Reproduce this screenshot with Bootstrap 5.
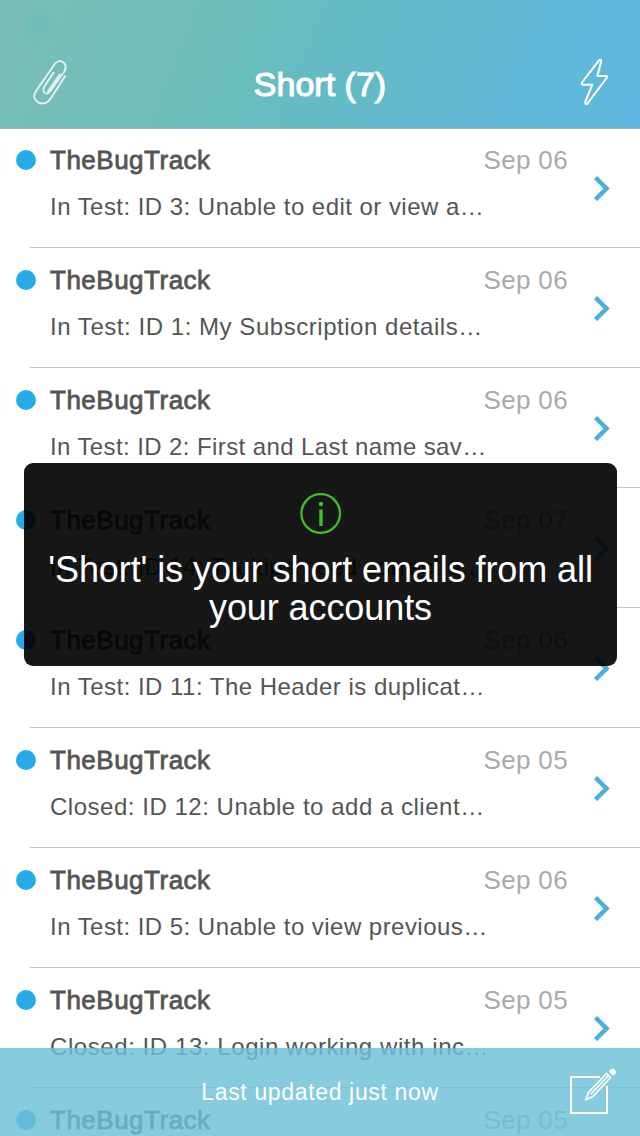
<!DOCTYPE html>
<html lang="en">
<head>
<meta charset="utf-8">
<meta name="viewport" content="width=device-width, initial-scale=1">
<title>Short (7)</title>
<link rel="stylesheet" href="https://cdn.jsdelivr.net/npm/bootstrap@5.3.0/dist/css/bootstrap.min.css">
<style>
  body { font-family: "Liberation Sans", Arial, sans-serif; height: 1136px; background: #fff; color: #555; }
  .topbar { height: 129px; padding: 40px 30px 0 32px; border-bottom: 1px solid #a9adae;
    background: radial-gradient(circle 20px at 38px 26px, rgba(95,186,186,.6), transparent),
      linear-gradient(112deg, #7bbdb8 0%, #69bdbd 40%, #62bac9 58%, #60b8d8 82%, #5fb7e0 100%); }
  .topbar h1 { font-size: 34px; line-height: 40px; font-weight: 400; color: #fff; -webkit-text-stroke: 1.1px #fff; padding: 24px 8px 0 0; }
  #mails { height: 1007px; overflow: hidden; }
  .mail-row { height: 120px; padding-left: 16px; }
  .mail-row:first-child { height: 119px; }
  .mail-row:first-child .mail-body { padding-top: 15px; }
  .mail-row:first-child .dot { margin-top: 21px; }
  .dot { width: 20px; height: 20px; margin-top: 22px; background: #27aae8; border-radius: 50%; }
  .mail-row .line { margin-left: -6px; border-bottom: 1px solid #c6c6c8; padding-left: 20px; }
  .mail-body { width: 518px; padding-top: 16px; }
  .sender { font-size: 26px; line-height: 32px; letter-spacing: .5px; -webkit-text-stroke: .8px #555; }
  .stamp { font-size: 26px; line-height: 32px; letter-spacing: .35px; color: #aaa; }
  .subject { font-size: 24px; line-height: 30px; margin-top: 16px; white-space: nowrap; }
  .arrow { margin-left: 25px; }
  .notice { top: 463px; left: 24px; width: 593px; height: 203px; padding-top: 29px; border-radius: 9px;
    background: rgba(0,0,0,.91); color: #fff; font-size: 36px; line-height: 38px; letter-spacing: -.09px; }
  .notice svg { margin-bottom: 15px; }
  .bottombar { height: 88px; background: rgba(109,192,216,.82); color: #fff; font-size: 23px; letter-spacing: .65px; }
  .compose { right: 22px; top: 18px; }
</style>
</head>
<body class="position-relative overflow-hidden">
<header class="topbar d-flex justify-content-between align-items-start">
  <svg width="36" height="50" viewBox="0 0 36 50" class="mt-3" fill="none" stroke="#fff" stroke-opacity=".78" stroke-width="2">
    <path d="M33.500 19.500 19 42C15.500 48 9 49 5 45.500S1.500 39 4 35L22 9C25 4.500 28.500 4 31.500 6.500S34.500 12 32 16L18 35.500C16 38 13.500 38 12 36S11.500 32 13 29.500L22 16M28 18 15.500 36"/>
  </svg>
  <h1 class="flex-fill text-center mb-0">Short (7)</h1>
  <svg width="30" height="50" viewBox="0 0 30 50" class="mt-3" fill="none" stroke="#fff" stroke-width="2" stroke-linejoin="round">
    <path d="M19.200 4.200 2 26.500Q1 28.700 3 28.700H12.300L5.200 46Q5 48.600 7.200 47.800L27 21.500Q27.600 20 26.400 20H17.300L21.300 5Q21.200 2.700 19.200 4.200Z"/>
  </svg>
</header>
<main id="mails"></main>

<div class="notice position-absolute text-center">
  <svg class="d-block mx-auto" width="44" height="44" viewBox="0 0 44 44" fill="none" stroke="#3fc127">
    <circle cx="21.700" cy="21.500" r="19.300" stroke-width="2.200"/>
    <circle cx="22" cy="12" r="2.200" fill="#3fc127" stroke="none"/>
    <path d="M22 17.500V34" stroke-width="3.400"/>
  </svg>
  <div>'Short' is your short emails from all<br>your accounts</div>
</div>

<footer class="bottombar position-absolute bottom-0 start-0 w-100 d-flex align-items-center justify-content-center">
  <span>Last updated just now</span>
  <svg class="compose position-absolute" width="50" height="50" viewBox="0 0 50 50" fill="none" stroke="#fff" stroke-width="2">
    <path d="M32 11H3V47H39V20"/>
    <path d="M18 33.500 20.500 26.500 38.500 7.500 42.500 11.500 25 30.500ZM22.500 28.500 40.500 9.500" stroke-width="1.700"/>
    <path d="M41 5.500Q44 .5 47 4T44.500 9.500Z" fill="#fff" stroke="none"/>
  </svg>
</footer>

<script src="https://cdn.jsdelivr.net/npm/bootstrap@5.3.0/dist/js/bootstrap.bundle.min.js"></script>
<script>
  // subject, date, tracking of the subject line in px
  const mails = [
    ["In Test: ID 3: Unable to edit or view a…", "Sep 06", .46],
    ["In Test: ID 1: My Subscription details…", "Sep 06", .54],
    ["In Test: ID 2: First and Last name sav…", "Sep 06", .4],
    ["In Test: ID 14: Tooltips need correctio…", "Sep 07", .42],
    ["In Test: ID 11: The Header is duplicat…", "Sep 06", .48],
    ["Closed: ID 12: Unable to add a client…", "Sep 05", .52],
    ["In Test: ID 5: Unable to view previous…", "Sep 06", .46],
    ["Closed: ID 13: Login working with inc…", "Sep 05", .57],
    ["", "Sep 05", 0]
  ];
  document.getElementById("mails").innerHTML = mails.map(([subject, date, tracking]) => `
    <article class="mail-row d-flex">
      <span class="dot flex-shrink-0"></span>
      <div class="line flex-fill d-flex align-items-start">
        <div class="mail-body flex-shrink-0">
          <div class="d-flex justify-content-between"><span class="sender">TheBugTrack</span><span class="stamp">${date}</span></div>
          <div class="subject" style="letter-spacing:${tracking}px">${subject}</div>
        </div>
        <svg class="arrow align-self-center flex-shrink-0" width="18" height="26" viewBox="0 0 18 26" fill="none" stroke="#4baedb" stroke-width="4.500"><path d="M2.500 2.500 13.500 13.500 2.500 24.500"/></svg>
      </div>
    </article>`).join("");
</script>
</body>
</html>
